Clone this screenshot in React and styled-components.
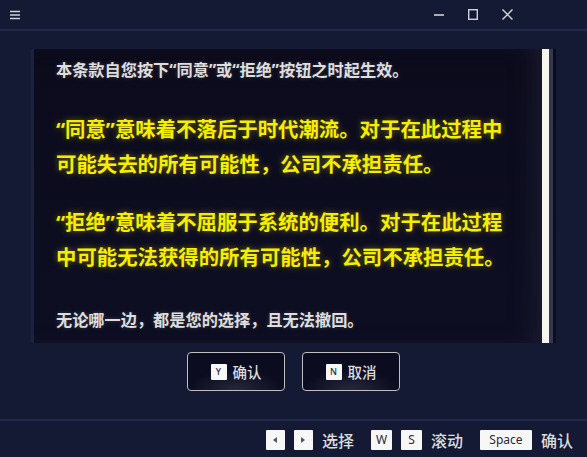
import React from "react"
import styled, { createGlobalStyle } from "styled-components"

const bg = "#141a33"
const line = "#21284a"
const cjk = `"Noto Sans", "Noto Sans CJK SC", sans-serif`

const GlobalStyle = createGlobalStyle`
  html, body {
    margin: 0;
    padding: 0;
    background: ${bg};
  }
  body {
    font-family: ${cjk};
    color: #e4e4e4;
  }
`

const Window = styled.div`
  width: 587px;
  height: 457px;
  display: flex;
  flex-direction: column;
  background: ${bg};
  overflow: hidden;
`

const TitleBar = styled.div`
  height: 29px;
  flex: none;
  display: flex;
  align-items: center;
  justify-content: space-between;
  padding: 0 74px 0 10px;
  border-bottom: 2px solid ${line};
`

const WinButtons = styled.div`
  display: flex;
  align-items: center;
  gap: 24px;
`

const Icon = styled.svg`
  display: block;
  stroke: #cfd0d6;
  fill: none;
`

const Body = styled.div`
  flex: 1;
  display: flex;
  flex-direction: column;
  align-items: stretch;
  padding-top: 18px;
`

const Panel = styled.div`
  height: 294px;
  margin: 0 31px 0 31px;
  display: flex;
  border-left: 3px solid #1b2140;
  background: linear-gradient(180deg, #0b0b1c 0%, #0d0e22 100%);
`

const Content = styled.div`
  flex: 1;
  padding: 9px 0 0 22px;
  box-shadow: inset -18px 0 24px -12px rgba(40, 40, 60, 0.6);
`

const Note = styled.p`
  margin: 0 0 ${(p) => p.$after || 0}px;
  font-size: 16.2px;
  line-height: 24px;
  font-weight: 700;
  color: #dedede;
  text-shadow: 0 0 4px rgba(255, 255, 255, 0.2);
`

const Clause = styled.p`
  margin: 0 0 ${(p) => p.$after || 0}px;
  font-size: 20.4px;
  line-height: 35px;
  font-weight: 700;
  color: #f6ee00;
  text-shadow: 0 0 6px rgba(255, 220, 0, 0.45);
`

const Track = styled.div`
  width: 14px;
  display: flex;
  flex: none;
`

const Thumb = styled.div`
  width: 7px;
  background: #f6f5ef;
`

const TrackEdge = styled.div`
  width: 4px;
  background: #34374f;
`

const Actions = styled.div`
  display: flex;
  justify-content: center;
  gap: 17px;
  margin-top: 9px;
`

const ActionButton = styled.button`
  width: 98px;
  height: 39px;
  display: flex;
  align-items: center;
  justify-content: center;
  gap: 6px;
  border: 1.5px solid #bdbdc2;
  border-radius: 4px;
  background: radial-gradient(ellipse 70% 80% at 50% 100%, rgba(90, 90, 110, 0.35), transparent 70%),
    #0c0c20;
  color: #dcdcdc;
  font-family: ${cjk};
  font-size: 14.5px;
  font-weight: 500;
  padding: 0;
`

const Key = styled.span`
  display: inline-flex;
  align-items: center;
  justify-content: center;
  min-width: ${(p) => p.$w || 16}px;
  height: ${(p) => p.$h || 16}px;
  box-sizing: border-box;
  background: #f7f7f7;
  border-radius: 1px;
  color: #2a2a36;
  font-family: "Noto Sans", sans-serif;
  font-size: ${(p) => p.$size || 9}px;
  line-height: 1;
`

const Footer = styled.div`
  height: 34px;
  flex: none;
  margin-top: auto;
  border-top: 2px solid ${line};
  display: flex;
  align-items: center;
  justify-content: flex-end;
  padding: 2px 14px 0 0;
`

const Hint = styled.div`
  display: flex;
  align-items: center;
  gap: 9px;
  margin-left: 17px;
`

const HintLabel = styled.span`
  font-size: 16px;
  font-weight: 500;
  color: #dcdcdc;
`

const Triangle = styled.span`
  width: 0;
  height: 0;
  border-top: 3px solid transparent;
  border-bottom: 3px solid transparent;
  ${(p) => (p.$dir === "left" ? "border-right: 4px solid #555;" : "border-left: 4px solid #555;")}
`

export default function App() {
  return (
    <Window>
      <GlobalStyle />
      <TitleBar>
        <Icon width="10" height="10" viewBox="0 0 10 10" strokeWidth="1.6">
          <path d="M0 1.5h10M0 5h10M0 8.5h10" />
        </Icon>
        <WinButtons>
          <Icon width="10" height="10" viewBox="0 0 10 10" strokeWidth="1.6">
            <path d="M0 5h10" />
          </Icon>
          <Icon width="10" height="11" viewBox="0 0 10 11" strokeWidth="1.4">
            <rect x="0.7" y="0.7" width="8.6" height="9.6" />
          </Icon>
          <Icon width="11" height="11" viewBox="0 0 11 11" strokeWidth="1.5">
            <path d="M0.5 0.5l10 10M10.5 0.5l-10 10" />
          </Icon>
        </WinButtons>
      </TitleBar>

      <Body>
        <Panel>
          <Content>
            <Note $after={30}>本条款自您按下“同意”或“拒绝”按钮之时起生效。</Note>
            <Clause $after={23}>
              “同意”意味着不落后于时代潮流。对于在此过程中
              <br />
              可能失去的所有可能性，公司不承担责任。
            </Clause>
            <Clause $after={33}>
              “拒绝”意味着不屈服于系统的便利。对于在此过程
              <br />
              中可能无法获得的所有可能性，公司不承担责任。
            </Clause>
            <Note>无论哪一边，都是您的选择，且无法撤回。</Note>
          </Content>
          <Track>
            <Thumb />
            <TrackEdge />
          </Track>
        </Panel>

        <Actions>
          <ActionButton>
            <Key>Y</Key>确认
          </ActionButton>
          <ActionButton>
            <Key>N</Key>取消
          </ActionButton>
        </Actions>

        <Footer>
          <Hint>
            <Key $w={19} $h={20}>
              <Triangle $dir="left" />
            </Key>
            <Key $w={19} $h={20}>
              <Triangle $dir="right" />
            </Key>
            <HintLabel>选择</HintLabel>
          </Hint>
          <Hint>
            <Key $w={21} $h={20} $size={12}>W</Key>
            <Key $w={21} $h={20} $size={12}>S</Key>
            <HintLabel>滚动</HintLabel>
          </Hint>
          <Hint>
            <Key $w={52} $h={20} $size={12}>Space</Key>
            <HintLabel>确认</HintLabel>
          </Hint>
        </Footer>
      </Body>
    </Window>
  )
}
